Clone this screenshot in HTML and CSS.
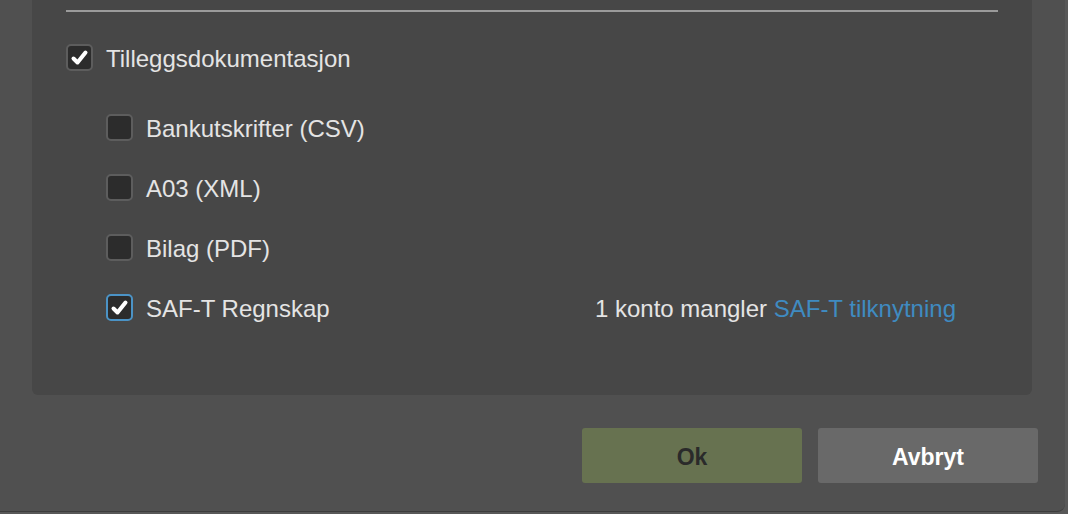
FILE: index.html
```html
<!DOCTYPE html>
<html lang="no">
<head>
<meta charset="utf-8">
<title>Eksport</title>
<link rel="stylesheet" href="styles.css">
</head>
<body>
<div class="dialog">
  <div class="panel">
    <div class="divider"></div>
    <div class="row main">
      <span class="box checked"><svg viewBox="0 0 27 27" width="27" height="27"><path d="M7.5 14.5 L11.5 18.5 L19.5 8.5" fill="none" stroke="#fff" stroke-width="4" stroke-linecap="round" stroke-linejoin="round"/></svg></span>
      <span class="label">Tilleggsdokumentasjon</span>
    </div>
    <div class="sub">
      <div class="row">
        <span class="box"></span>
        <span class="label">Bankutskrifter (CSV)</span>
      </div>
      <div class="row">
        <span class="box"></span>
        <span class="label">A03 (XML)</span>
      </div>
      <div class="row">
        <span class="box"></span>
        <span class="label">Bilag (PDF)</span>
      </div>
      <div class="row">
        <span class="box checked focus"><svg viewBox="0 0 27 27" width="27" height="27"><path d="M7.5 14.5 L11.5 18.5 L19.5 8.5" fill="none" stroke="#fff" stroke-width="4" stroke-linecap="round" stroke-linejoin="round"/></svg></span>
        <span class="label">SAF-T Regnskap</span>
        <span class="note">1 konto mangler <a class="link" href="#">SAF-T tilknytning</a></span>
      </div>
    </div>
  </div>
  <div class="actions">
    <button class="btn ok" type="button">Ok</button>
    <button class="btn cancel" type="button">Avbryt</button>
  </div>
</div>
</body>
</html>
```
FILE: styles.css
```css
html, body {
  margin: 0;
  padding: 0;
}
body {
  background: #585858;
  width: 1068px;
  height: 514px;
  overflow: hidden;
  font-family: "Liberation Sans", Arial, sans-serif;
  color: #e4e4e4;
}
.dialog {
  width: 1065px;
  height: 512px;
  background: #505050;
  border-bottom-right-radius: 8px;
  border-bottom: 1px solid #3c3c3c;
  box-sizing: border-box;
  display: flex;
  flex-direction: column;
}
.panel {
  margin-left: 32px;
  width: 1000px;
  height: 395px;
  box-sizing: border-box;
  background: #474747;
  border-radius: 0 0 6px 6px;
  padding: 10px 34px 0 34px;
}
.divider {
  height: 2px;
  background: #9b9b9b;
}
.row {
  display: flex;
  align-items: center;
  height: 27px;
  font-size: 24px;
}
.main {
  margin-top: 32px;
}
.sub {
  margin-top: 43px;
  padding-left: 40px;
  display: flex;
  flex-direction: column;
  gap: 33px;
}
.box {
  width: 27px;
  height: 27px;
  box-sizing: border-box;
  border: 2px solid #5d5d5d;
  border-radius: 5px;
  background: #2c2c2c;
  flex: none;
  position: relative;
}
.box svg {
  position: absolute;
  left: -2px;
  top: -2px;
}
.box.focus {
  border-color: #4b93c6;
}
.label {
  margin-left: 13px;
  padding-top: 3px;
}
.note {
  margin-left: auto;
  margin-right: 42px;
  padding-top: 3px;
}
.link {
  color: #3f8bc1;
  text-decoration: none;
}
.actions {
  display: flex;
  justify-content: flex-end;
  gap: 16px;
  margin-top: 33px;
  padding-right: 27px;
}
.btn {
  width: 220px;
  height: 55px;
  border: 0;
  border-radius: 3px;
  font-family: "Liberation Sans", Arial, sans-serif;
  font-weight: bold;
  font-size: 23px;
  padding: 3px 0 0 0;
}
.ok {
  background: #677250;
  color: #2a2a2a;
}
.cancel {
  background: #696969;
  color: #ffffff;
}
```
